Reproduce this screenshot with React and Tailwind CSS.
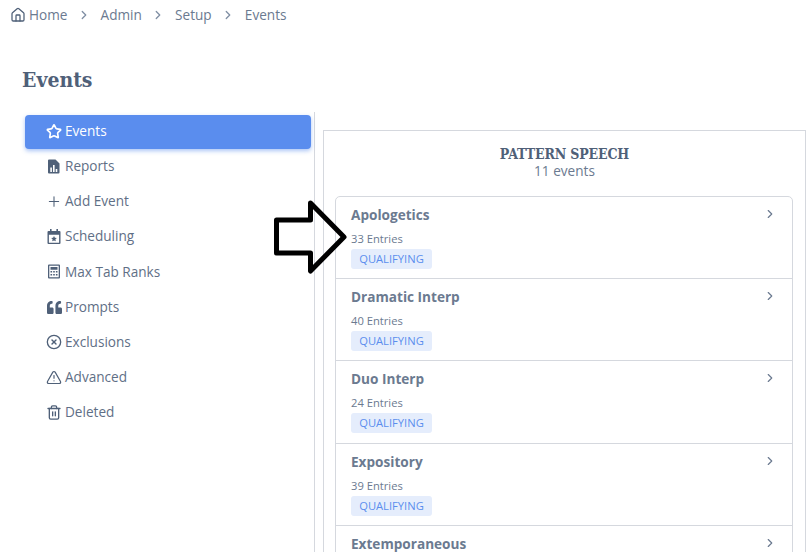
import { ChevronRight, CircleX, Plus, Star, TriangleAlert, Trash2, House } from 'lucide-react';
import { FaQuoteLeft } from 'react-icons/fa';

const FileChart = () => (
  <svg viewBox="0 0 16 16" className="w-[17px] h-[17px]" fill="currentColor">
    <path fillRule="evenodd" d="M3 1h6.5L13.5 5v9a1 1 0 0 1-1 1H3a1 1 0 0 1-1-1V2a1 1 0 0 1 1-1zM4.3 9v4.5h1.6V9H4.3zm2.7-2.4v6.9h1.6V6.6H7zm2.7 3.9v3h1.6v-3H9.7z" />
  </svg>
);

const CalendarStar = () => (
  <svg viewBox="0 0 16 16" className="w-[17px] h-[17px]" fill="currentColor">
    <path fillRule="evenodd" d="M4 0.5h1.6v2h4.8v-2H12v2h1.5a1 1 0 0 1 1 1V14.5a1 1 0 0 1-1 1h-11a1 1 0 0 1-1-1V3.5a1 1 0 0 1 1-1H4v-2zM2.9 6.2v8h10.2v-8H2.9z" />
    <path d="M8 7.4l.9 1.9 2 .2-1.5 1.3.4 2L8 11.9l-1.8.9.4-2-1.5-1.3 2-.2z" />
  </svg>
);

const CalculatorIcon = () => (
  <svg viewBox="0 0 16 16" className="w-[17px] h-[17px]" fill="currentColor">
    <path fillRule="evenodd" d="M3 1h10a1 1 0 0 1 1 1v12a1 1 0 0 1-1 1H3a1 1 0 0 1-1-1V2a1 1 0 0 1 1-1zm.3 1.3v11.4h9.4V2.3H3.3z" />
    <path d="M4.5 3.5h7v2.7h-7zM4.5 7.6h1.6V9H4.5zM7.2 7.6h1.6V9H7.2zM9.9 7.6h1.6V9H9.9zM4.5 10.5h1.6v1.4H4.5zM7.2 10.5h1.6v1.4H7.2zM9.9 10.5h1.6v1.4H9.9z" />
  </svg>
);

const NAV_ITEMS = [
  { label: 'Events', icon: <Star size={17} strokeWidth={2.5} />, active: true },
  { label: 'Reports', icon: <FileChart /> },
  { label: 'Add Event', icon: <Plus size={17} strokeWidth={1.6} /> },
  { label: 'Scheduling', icon: <CalendarStar /> },
  { label: 'Max Tab Ranks', icon: <CalculatorIcon /> },
  { label: 'Prompts', icon: <FaQuoteLeft className="w-[15px] h-[15px]" /> },
  { label: 'Exclusions', icon: <CircleX size={16} strokeWidth={2} /> },
  { label: 'Advanced', icon: <TriangleAlert size={17} strokeWidth={1.8} /> },
  { label: 'Deleted', icon: <Trash2 size={17} strokeWidth={2} /> },
];

const EVENTS = [
  { name: 'Apologetics', entries: 33 },
  { name: 'Dramatic Interp', entries: 40 },
  { name: 'Duo Interp', entries: 24 },
  { name: 'Expository', entries: 39 },
  { name: 'Extemporaneous', entries: 31 },
];

const CRUMBS = ['Admin', 'Setup', 'Events'];

export default function App() {
  return (
    <div className="h-[552px] overflow-hidden bg-white text-[#6b7a90] font-['Open_Sans',sans-serif] relative">
      {/* Breadcrumb */}
      <div className="flex items-center h-[30px] pl-[10px] text-[13.6px]">
        <House size={16} strokeWidth={1.9} className="text-[#4f6078]" />
        <span className="ml-[3px]">Home</span>
        {CRUMBS.map((c) => (
          <div key={c} className="flex items-center">
            <ChevronRight size={14} strokeWidth={2.2} className="mx-[9.6px] text-[#7f8ea3]" />
            <span>{c}</span>
          </div>
        ))}
      </div>

      <h1 className="mt-[35px] ml-[22px] h-[29px] text-[21px] leading-[29px] font-bold text-[#4f6078] font-['DejaVu_Serif_Condensed','DejaVu_Serif',serif]">
        Events
      </h1>

      <div className="flex mt-[18px] ml-[25px]">
        {/* Side nav */}
        <nav className="w-[290px] h-[500px] border-r border-[#d5d8de] pr-[3px] pt-[3px]">
          {NAV_ITEMS.map((item) => (
            <div
              key={item.label}
              className={
                item.active
                  ? 'flex items-center h-[34.2px] mb-[1px] pb-[2px] pl-[21px] rounded-[4px] text-white bg-[#5a8dee] shadow-[0_2px_4px_rgba(90,141,238,0.5)] text-[13.6px]'
                  : 'flex items-center h-[34.2px] mb-[1px] pb-[2px] pl-[21px] text-[#5f6f86] text-[13.6px]'
              }
            >
              <span className={item.active ? 'flex justify-center w-4 text-white' : 'flex justify-center w-4 text-[#4f6078]'}>
                {item.icon}
              </span>
              <span className="ml-[3px]">{item.label}</span>
            </div>
          ))}
        </nav>

        {/* Event card */}
        <section className="ml-[8px] w-[483px] h-[500px] mt-[18px] border border-[#d5d8de] px-[11px]">
          <div className="h-[65px] pt-[13px] text-center">
            <p className="text-[14px] leading-[20px] font-bold tracking-[-0.15px] text-[#4f6078] font-['DejaVu_Serif_Condensed','DejaVu_Serif',serif]">
              PATTERN SPEECH
            </p>
            <p className="text-[13.6px] leading-[18px] -mt-[2px] text-[#6b7a90]">11 events</p>
          </div>
          <div className="w-[458px] border border-[#d5d8de] rounded-t-[5px]">
            {EVENTS.map((ev, i) => (
              <div
                key={ev.name}
                className={i === 0 ? 'relative h-[81px] pl-[15px] pt-[8px]' : 'relative h-[82.3px] pl-[15px] pt-[8px] border-t border-[#d5d8de]'}
              >
                <p className="text-[13.6px] leading-[20px] font-bold text-[#6b7a90]">{ev.name}</p>
                <p className="mt-[6px] text-[11.2px] leading-[16px] text-[#6b7a90]">{ev.entries} Entries</p>
                <span className="block mt-[2px] w-[81px] text-center h-[20px] leading-[20px] rounded-[3px] bg-[#e5edfc] text-[#5a8dee] text-[11.2px]">
                  QUALIFYING
                </span>
                <ChevronRight size={14} strokeWidth={2} className="absolute right-[15px] top-[10px] text-[#6b7a90]" />
              </div>
            ))}
          </div>
        </section>
      </div>

      {/* Annotation arrow */}
      <svg className="absolute left-[270px] top-[195px]" width="85" height="85" viewBox="0 0 85 85" fill="none">
        <path d="M6.5 25H40.5V8L74 42L40.5 76V58H6.5Z" stroke="black" strokeWidth="5" strokeLinejoin="round" />
      </svg>
    </div>
  );
}
